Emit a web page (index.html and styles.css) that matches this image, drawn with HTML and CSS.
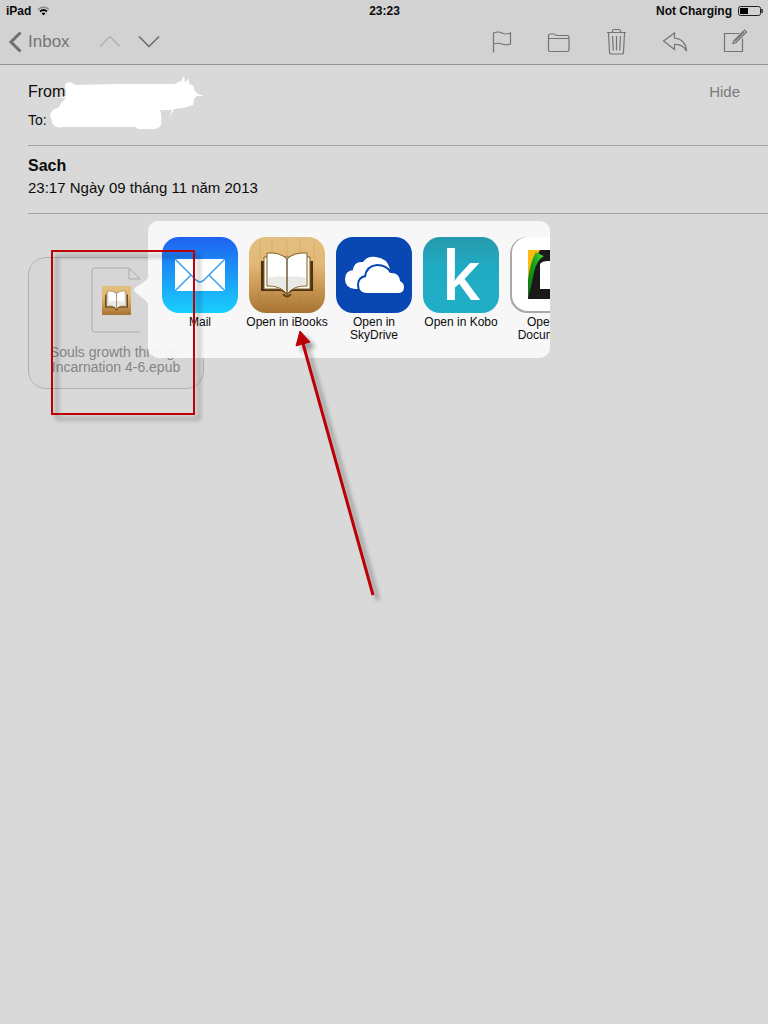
FILE: index.html
```html
<!DOCTYPE html>
<html lang="vi">
<head>
<meta charset="utf-8">
<meta name="viewport" content="width=device-width, initial-scale=1">
<title>Mail - Sach</title>
<link rel="stylesheet" href="styles.css">
</head>
<body>
<svg class="defs" aria-hidden="true">
  <defs>
    <linearGradient id="wood" x1="0" y1="0" x2="0" y2="1"><stop offset="0" stop-color="#e2bf80"/><stop offset=".35" stop-color="#e3b976"/><stop offset=".65" stop-color="#cb9a55"/><stop offset="1" stop-color="#a87333"/></linearGradient>
    <linearGradient id="sky" x1="0" y1="0" x2="0" y2="1"><stop offset="0" stop-color="#1d62f0"/><stop offset="1" stop-color="#19d0fd"/></linearGradient>
    <linearGradient id="teal" x1="0" y1="0" x2="0" y2="1"><stop offset="0" stop-color="#2899ae"/><stop offset=".4" stop-color="#1fabc2"/><stop offset="1" stop-color="#20aec8"/></linearGradient>
    <linearGradient id="leaf" x1="0" y1="1" x2="1" y2="0"><stop offset="0" stop-color="#0b6d16"/><stop offset=".6" stop-color="#19a51f"/><stop offset="1" stop-color="#5bd936"/></linearGradient>
    <symbol id="book" viewBox="0 0 76 76">
      <path d="M12 24h52v30H45q-4 0-7 4-3-4-7-4H12z" fill="#493313"/>
      <path d="M15 20h46v32H46q-5 0-8 5-3-5-8-5H15z" fill="#fff8e8" stroke="#80602c"/>
      <path d="M18 16q13-1 20 6 7-7 20-6v33q-13-1-20 8-7-9-20-8z" fill="#fff" stroke="#7b5c2b"/>
      <path d="M19 41q10-3 19-1 9-2 19 1v7q-12-1-19 8-7-9-19-8z" fill="#e9e9e6"/>
      <path d="M38 22v34" stroke="#735b35" stroke-width="1.5"/>
      <path d="M34 57q4 5 8 0" fill="none" stroke="#5b411b" stroke-width="2"/>
    </symbol>
  </defs>
</svg>

<header class="top">
  <div class="status">
    <span class="status-device">iPad
      <svg width="13" height="10" viewBox="0 0 13 10"><g fill="none"><path d="M1 3.5q5.500-4.500 11 0" stroke="#888" stroke-width="1.5"/><path d="M3 5.500q3.500-3 7 0" stroke="#000" stroke-width="1.800"/></g><path d="M4.500 7.200q2-1.500 4 0l-2 2.300z"/></svg>
    </span>
    <time>23:23</time>
    <span class="status-power">Not Charging
      <svg width="25" height="10" viewBox="0 0 25 10"><rect x=".5" y=".5" width="22" height="9" rx="2" fill="none" stroke="#222"/><rect x="2" y="2" width="8" height="6"/><path d="M24 3v4" stroke="#222" stroke-width="1.500"/></svg>
    </span>
  </div>
  <nav class="toolbar" aria-label="Message">
    <a class="back" href="#inbox"><svg width="14" height="22" viewBox="0 0 14 22"><path d="M12.500 1.500 3 11l9.500 9.500" fill="none" stroke="#707070" stroke-width="3"/></svg>Inbox</a>
    <div class="steps">
      <button class="tool" aria-label="Previous message" disabled><svg width="22" height="22" viewBox="0 0 22 22"><path d="m1 15.500 10-10 10 10" fill="none" stroke="#b0b0b0" stroke-width="1.400"/></svg></button>
      <button class="tool" aria-label="Next message"><svg width="22" height="22" viewBox="0 0 22 22"><path d="m1 5.500 10 10 10-10" fill="none" stroke="#686868" stroke-width="1.500"/></svg></button>
    </div>
    <div class="actions">
      <button class="tool" aria-label="Flag"><svg class="line" viewBox="0 0 28 28"><path d="M5.500 24.500V5q5-2 8.500 0t8.500 0v11q-5 1.500-8.500 0t-8.500 0"/></svg></button>
      <button class="tool" aria-label="Move"><svg class="line" viewBox="0 0 28 28"><path d="M2.500 10.500V8q0-2 1.500-2h4q1 0 2 1.500h11.500q1.500 0 1.500 1.500v13q0 1.500-1.500 1.500h-17.500q-1.500 0-1.500-1.500zH23"/></svg></button>
      <button class="tool" aria-label="Delete"><svg class="line" viewBox="0 0 28 28"><path d="M3 4.500h19M8.500 4.500v-1.500q0-1.500 1.500-1.500h5q1.500 0 1.500 1.500v1.500M4.500 5l1 19q0 2 2 2h10q2 0 2-2l1-19M8.500 8l.8 14.500M12.500 8v14.500M16.500 8l-.8 14.500"/></svg></button>
      <button class="tool" aria-label="Reply"><svg class="line" viewBox="0 0 28 28"><path d="M12.500 5v5Q23.500 11 24.500 23q-4-7-12-6.500v5L1.500 13z"/></svg></button>
      <button class="tool" aria-label="Compose"><svg class="line" viewBox="0 0 28 28"><path d="M19.500 5.500h-15v18h18v-13M13 15.500l1-3L24.500 2l2 2L16 14.500z"/><path d="m15 13 9-9"/></svg></button>
    </div>
  </nav>
</header>

<main class="message">
  <section class="people">
    <div class="from"><span>From</span><button class="hide">Hide</button></div>
    <div class="to">To:</div>
    <svg class="scribble" width="156" height="54" viewBox="0 0 156 54" aria-hidden="true"><path d="M6 22 16 20 15 9Q17 5 22 7L25 9 67 8 125 8 130 5 130 7 134 0 135 7 139 2 139 8Q145 9 144 14L148 18 154 20 147 20 144 23 143 29 133 32 124 33 119 43 122 34H110Q112 38 111 49 109 53 103 53H90Q86 53 86 51H12Q6 53 2 47L0 38 3 34 9 31 11 27 16 22z" fill="#fff"/></svg>
  </section>
  <section class="subject">
    <h1>Sach</h1>
    <p>23:17 Ngày 09 tháng 11 năm 2013</p>
  </section>
  <section class="content">
    <a class="attachment" href="#file">
      <svg width="50" height="66" viewBox="0 0 50 66" aria-hidden="true"><path d="M49 65H4q-3 0-3-3V4q0-3 3-3h34l11 11H38V1" fill="none" stroke="#aaa"/><rect x="11" y="19" width="29" height="29" fill="url(#wood)"/><use href="#book" x="9" y="17" width="33" height="33"/></svg>
      <span>Souls growth through Incarnation 4-6.epub</span>
    </a>
    <div class="popover" role="dialog" aria-label="Share">
      <svg class="pointer" width="14" height="30" viewBox="0 0 14 30" aria-hidden="true"><path d="M14 0Q14 4 11 6L1 13Q-1 15 1 17L11 25Q14 27 14 30z"/></svg>
      <div class="apps">
        <button class="app">
          <svg class="app-icon" viewBox="0 0 76 76"><rect width="76" height="76" rx="17" fill="url(#sky)"/><path d="M13 22h50v32H13z" fill="#fff"/><path d="m13 22 21 21q4 4 8 0l21-21M13 54l16-16M63 54 47 38" fill="none" stroke="#3b9cf5" stroke-width="1.500"/></svg>
          <span>Mail</span>
        </button>
        <button class="app">
          <svg class="app-icon" viewBox="0 0 76 76"><rect width="76" height="76" rx="17" fill="url(#wood)"/><path d="M11 2v72M23 1v74M38 1v75M51 1v74M65 2v72" stroke="#ad7939" stroke-opacity=".25" stroke-width=".7"/><use href="#book" width="76" height="76"/></svg>
          <span>Open in iBooks</span>
        </button>
        <button class="app">
          <svg class="app-icon" viewBox="0 0 76 76"><rect width="76" height="76" rx="17" fill="#0948b2"/><path d="M19 52q-10-1-10-10 0-8 8-9 1-9 10-8 4-6 13-5 11 1 14 12l-2 13-20 7z" fill="#fff"/><path d="M31 56q-8 0-8-8 0-7 7-8 1-10 11-11 9 0 13 7 9-1 10 8 4 2 4 6 0 6-6 6z" fill="#fff" stroke="#0948b2" stroke-width="4"/><path d="M31 56q-8 0-8-8 0-7 7-8 1-10 11-11 9 0 13 7 9-1 10 8 4 2 4 6 0 6-6 6z" fill="#fff"/></svg>
          <span>Open in SkyDrive</span>
        </button>
        <button class="app">
          <svg class="app-icon" viewBox="0 0 76 76"><rect width="76" height="76" rx="17" fill="url(#teal)"/><text class="kobo" x="38" y="63" text-anchor="middle">k</text></svg>
          <span>Open in Kobo</span>
        </button>
        <button class="app">
          <svg class="app-icon" viewBox="0 0 76 76"><rect width="76" height="76" rx="17" fill="#aaa"/><rect x="2" width="74" height="74" rx="16" fill="#fff"/><path d="M18 13h58v49H18z" fill="#191919"/><path d="M18 13h12q-10 20-12 37z" fill="#fdbb12"/><path d="M26 15q5 3 8 4-7 4-10 16-3 15-6 27V43q2-18 8-28z" fill="url(#leaf)"/><path d="M30 27q2-3 8-3h12v28H30z" fill="#fff"/></svg>
          <span>Open in Documents</span>
        </button>
      </div>
    </div>
  </section>
  <svg class="marks" width="360" height="370" viewBox="0 0 360 370" aria-hidden="true"><rect x="12" y="12" width="142" height="163" fill="none" stroke="#bd0006" stroke-width="2"/><path d="m262 101 71 255" stroke="#bd0006" stroke-width="3"/><path d="m260 92-4 15 14-4z" fill="#bd0006" stroke="#bd0006"/></svg>
</main>
</body>
</html>
```
FILE: styles.css
```css
* { box-sizing: border-box; }
body {
  margin: 0;
  min-height: 100vh;
  background: #d9d9d9;
  color: #0c0c0c;
  font-family: "Liberation Sans", Arial, sans-serif;
}
button {
  margin: 0;
  padding: 0;
  border: 0;
  background: none;
  color: inherit;
  font: inherit;
}
a { color: inherit; text-decoration: none; }
svg { display: block; flex: none; }
.defs { position: absolute; width: 0; height: 0; }

.top { background: #d2d2d2; border-bottom: 1px solid #929292; }
.status {
  display: grid;
  grid-template-columns: 1fr auto 1fr;
  align-items: center;
  height: 22px;
  padding: 0 5px 0 6px;
  font-size: 12px;
  font-weight: bold;
}
.status-device, .status-power { display: flex; align-items: center; gap: 6px; }
.status-power { justify-content: flex-end; }
.toolbar { display: flex; align-items: center; height: 42px; padding: 0 20px 2px 8px; }
.back { display: flex; align-items: center; gap: 6px; color: #757575; font-size: 17px; }
.steps { display: flex; gap: 17px; margin-left: 29px; }
.actions { display: flex; gap: 30px; margin-left: auto; }
.line { width: 28px; height: 28px; fill: none; stroke: #747474; stroke-width: 1.2; }

.message { position: relative; }
.people {
  position: relative;
  margin-left: 28px;
  padding: 16px 28px 14px 0;
  border-bottom: 1px solid #a4a4a4;
}
.from { display: flex; justify-content: space-between; font-size: 16px; line-height: 22px; }
.hide { color: #7b7b7b; font-size: 15px; }
.to { margin-top: 6px; font-size: 14px; line-height: 22px; }
.scribble { position: absolute; left: 22px; top: 11px; }
.subject { margin-left: 28px; padding: 9px 0 14px; border-bottom: 1px solid #a4a4a4; }
.subject h1 { margin: 0; font-size: 16px; line-height: 22px; }
.subject p { margin: 0; font-size: 15px; line-height: 22px; }

.content { position: relative; padding: 43px 28px; }
.attachment {
  display: flex;
  flex-direction: column;
  align-items: center;
  gap: 12px;
  width: 176px;
  padding: 9px 16px 13px;
  border: 1px solid #b0b0b0;
  border-radius: 18px;
  background: #d6d6d6;
  color: #858585;
  font-size: 14px;
  line-height: 15px;
  text-align: center;
}
.popover { position: absolute; left: 148px; top: 7px; width: 402px; }
.pointer { position: absolute; left: -14px; top: 54px; fill: #f7f7f7; }
.apps {
  display: flex;
  gap: 1px;
  height: 137px;
  padding: 16px 0 0 9px;
  overflow: hidden;
  border-radius: 10px;
  background: rgba(248, 248, 248, .96);
}
.app {
  display: flex;
  flex: none;
  flex-direction: column;
  align-items: center;
  gap: 3px;
  width: 86px;
  font-size: 12px;
  line-height: 13px;
}
.app-icon { width: 76px; height: 76px; }
.kobo { fill: #fff; font: 600 68px "Open Sans", sans-serif; }
.marks {
  position: absolute;
  left: 40px;
  top: 174px;
  pointer-events: none;
  filter: drop-shadow(5px 5px 2px rgba(0, 0, 0, .35));
}
```
